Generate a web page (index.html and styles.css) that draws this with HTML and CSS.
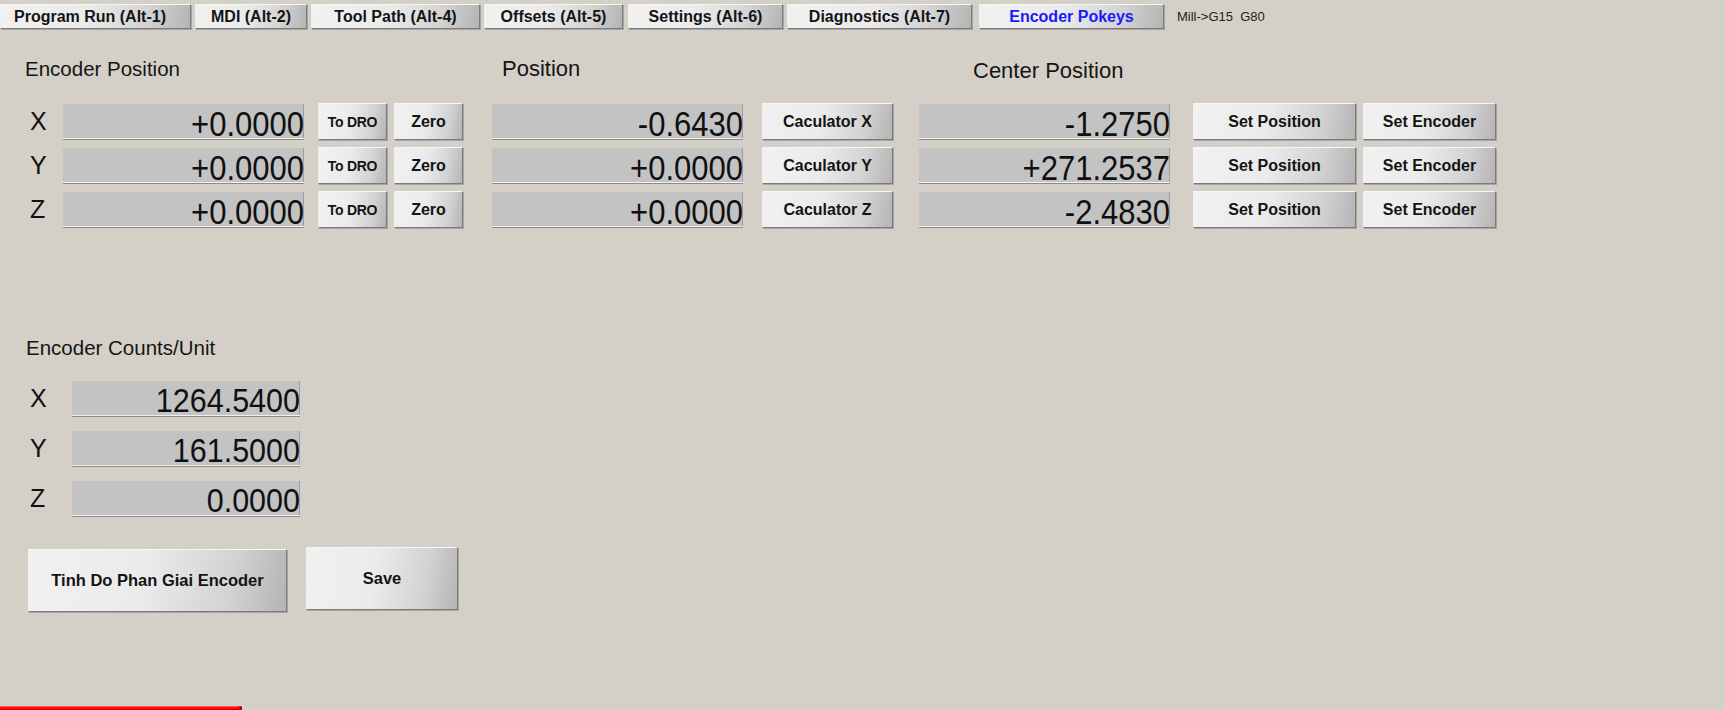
FILE: index.html
```html
<!DOCTYPE html>
<html>
<head>
<meta charset="utf-8">
<title>Encoder Pokeys</title>
<link rel="stylesheet" href="styles.css">
</head>
<body>
<nav class="tabs">
  <button class="tab tab1">Program Run (Alt-1)</button>
  <button class="tab tab2">MDI (Alt-2)</button>
  <button class="tab tab3">Tool Path (Alt-4)</button>
  <button class="tab tab4">Offsets (Alt-5)</button>
  <button class="tab tab5">Settings (Alt-6)</button>
  <button class="tab tab6">Diagnostics (Alt-7)</button>
  <button class="tab tab7 active">Encoder Pokeys</button>
  <span class="mode">Mill-&gt;G15&nbsp;&nbsp;G80</span>
</nav>

<main class="main">
  <section class="top">
    <div class="block blk-a">
      <h2 class="hdr">Encoder Position</h2>
      <div class="rows">
        <div class="row"><span class="axis">X</span><div class="dro"><span class="val">+0.0000</span></div><button class="btn b-todro">To DRO</button><button class="btn b-zero">Zero</button></div>
        <div class="row"><span class="axis">Y</span><div class="dro"><span class="val">+0.0000</span></div><button class="btn b-todro">To DRO</button><button class="btn b-zero">Zero</button></div>
        <div class="row"><span class="axis">Z</span><div class="dro"><span class="val">+0.0000</span></div><button class="btn b-todro">To DRO</button><button class="btn b-zero">Zero</button></div>
      </div>
    </div>

    <div class="block blk-b">
      <h2 class="hdr hdr-lg">Position</h2>
      <div class="rows">
        <div class="row"><div class="dro"><span class="val">-0.6430</span></div><button class="btn b-calc">Caculator X</button></div>
        <div class="row"><div class="dro"><span class="val">+0.0000</span></div><button class="btn b-calc">Caculator Y</button></div>
        <div class="row"><div class="dro"><span class="val">+0.0000</span></div><button class="btn b-calc">Caculator Z</button></div>
      </div>
    </div>

    <div class="block blk-c">
      <h2 class="hdr hdr-lg">Center Position</h2>
      <div class="rows">
        <div class="row"><div class="dro"><span class="val">-1.2750</span></div><button class="btn b-setpos">Set Position</button><button class="btn b-setenc">Set Encoder</button></div>
        <div class="row"><div class="dro"><span class="val">+271.2537</span></div><button class="btn b-setpos">Set Position</button><button class="btn b-setenc">Set Encoder</button></div>
        <div class="row"><div class="dro"><span class="val">-2.4830</span></div><button class="btn b-setpos">Set Position</button><button class="btn b-setenc">Set Encoder</button></div>
      </div>
    </div>
  </section>

  <section class="counts">
    <h2 class="hdr">Encoder Counts/Unit</h2>
    <div class="crows">
      <div class="crow"><span class="axis">X</span><div class="cdro"><span class="val">1264.5400</span></div></div>
      <div class="crow"><span class="axis">Y</span><div class="cdro"><span class="val">161.5000</span></div></div>
      <div class="crow"><span class="axis">Z</span><div class="cdro"><span class="val">0.0000</span></div></div>
    </div>
  </section>

  <section class="actions">
    <button class="btn big b-tinh">Tinh Do Phan Giai Encoder</button>
    <button class="btn big b-save">Save</button>
  </section>

  <div class="redbar"></div>
</main>
</body>
</html>
```

FILE: styles.css
```css
* {
  box-sizing: border-box;
}

html,
body {
  margin: 0;
  padding: 0;
  height: 710px;
  overflow: hidden;
}

body {
  background: #d4d0c8;
  font-family: "Liberation Sans", Arial, sans-serif;
  color: #111;
}

/* ---------- tabs ---------- */
.tabs {
  display: flex;
  align-items: center;
  gap: 4px;
  padding-top: 4px;
  height: 29px;
}

.tab,
.btn {
  appearance: none;
  margin: 0;
  padding: 0;
  font-family: "Liberation Sans", Arial, sans-serif;
  font-weight: bold;
  font-size: 16px;
  line-height: 1;
  color: #141414;
  border: 1px solid;
  border-color: #f6f6f6 #7b7b7b #7b7b7b #f0f0f0;
  background: linear-gradient(100deg, #f1f1f1 0%, #ebebeb 45%, #d2d2d2 78%, #b4b4b4 100%);
  box-shadow: 1px 1px 0 #a5a5a5;
  white-space: nowrap;
}

.tab {
  height: 25px;
}

.tab1 { width: 191px; padding-right: 11px; }
.tab2 { width: 112px; }
.tab3 { width: 169px; }
.tab4 { width: 139px; }
.tab5 { width: 155px; margin-left: 1px; }
.tab6 { width: 185px; }
.tab7 { width: 185px; margin-left: 3px; }

.tab.active {
  color: #1a1aff;
}

.mode {
  margin-left: 9px;
  font-size: 13px;
  color: #222;
}

/* ---------- main ---------- */
.main {
  padding-top: 28px;
  padding-left: 25px;
}

.top {
  display: flex;
  align-items: flex-start;
}

.hdr {
  margin: 0;
  font-weight: normal;
  font-size: 20.5px;
  line-height: 24px;
  height: 24px;
  color: #151515;
  white-space: nowrap;
}

.hdr-lg {
  font-size: 22px;
}

.blk-b {
  margin-left: 29px;
}

.blk-b .hdr {
  margin-left: 10px;
}

.blk-c {
  margin-left: 26px;
}

.blk-c .hdr {
  margin-left: 54px;
  padding-top: 2px;
}

.rows {
  display: flex;
  flex-direction: column;
  gap: 7px;
  margin-top: 22px;
}

.row {
  display: flex;
  align-items: center;
  height: 37px;
}

.axis {
  font-size: 25px;
  line-height: 1;
  color: #111;
}

.blk-a .rows {
  padding-left: 5px;
}

.blk-a .axis {
  width: 33px;
}

.dro,
.cdro {
  background: #c3c3c3;
  text-align: right;
  white-space: nowrap;
  color: #101010;
  border-bottom: 1px solid #f0f0f0;
  box-shadow: 0 1px 0 #8a8a8a, inset -1px 0 0 #9e9e9e;
}

.dro {
  height: 35px;
  font-size: 31px;
  line-height: 44px;
}

.val {
  display: inline-block;
  transform: scaleY(1.15);
  transform-origin: 50% 75%;
}

.blk-a .dro {
  width: 241px;
  margin-right: 14px;
}

.blk-b .dro {
  width: 251px;
  margin-right: 19px;
}

.blk-c .dro {
  width: 251px;
  margin-right: 23px;
}

.btn {
  height: 37px;
}

.b-todro {
  width: 69px;
  font-size: 14px;
  letter-spacing: -0.3px;
}

.b-zero {
  width: 69px;
  margin-left: 7px;
}

.b-calc {
  width: 131px;
}

.b-setpos {
  width: 163px;
}

.b-setenc {
  width: 133px;
  margin-left: 7px;
}

/* ---------- counts ---------- */
.counts {
  margin-top: 108px;
  padding-left: 1px;
}

.crows {
  display: flex;
  flex-direction: column;
  gap: 15px;
  margin-top: 21px;
}

.crow {
  display: flex;
  align-items: center;
  padding-left: 4px;
}

.crow .axis {
  width: 42px;
}

.cdro {
  width: 228px;
  height: 35px;
  font-size: 30.5px;
  line-height: 40px;
}

.cdro .val {
  transform: scaleY(1.08);
}

/* ---------- actions ---------- */
.actions {
  display: flex;
  align-items: flex-start;
  gap: 19px;
  margin-top: 31px;
  padding-left: 3px;
}

.big {
  height: 63px;
  font-size: 16.5px;
}

.b-tinh {
  width: 259px;
  margin-top: 2px;
}

.b-save {
  width: 152px;
}

/* ---------- red bar ---------- */
.redbar {
  margin-top: 94px;
  margin-left: -25px;
  width: 242px;
  height: 4px;
  border-top-right-radius: 2px;
  background: linear-gradient(to bottom, #ff8c8c 0, #ff1e1e 1px, #f00000 3px, #d80000 100%);
  box-shadow: inset -2px 0 0 #b00000;
}
```
